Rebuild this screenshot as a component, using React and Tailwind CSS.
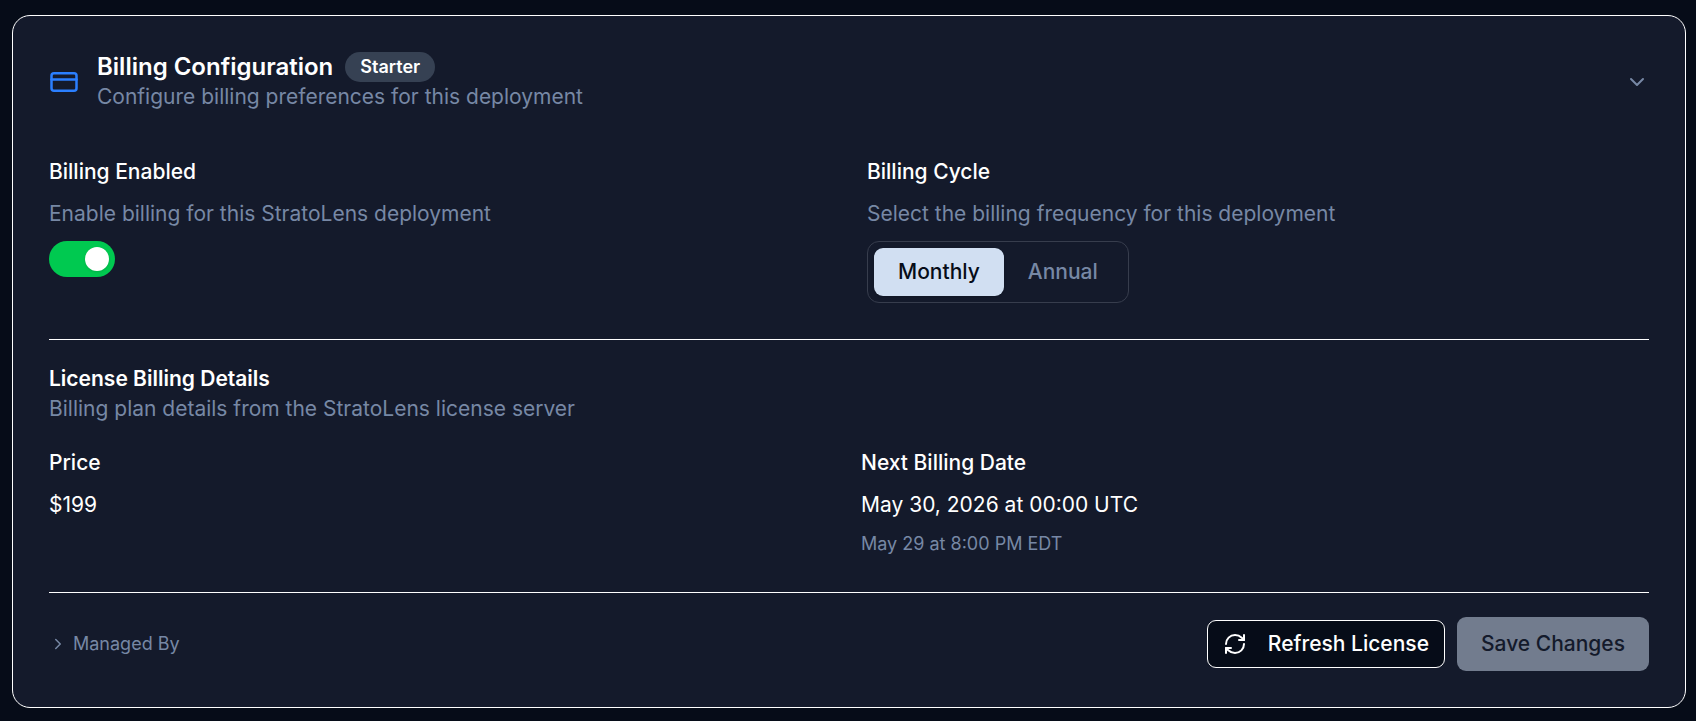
import { useState } from "react";
import { ChevronDown, ChevronRight, CreditCard, RefreshCw } from "lucide-react";

const cycles = ["Monthly", "Annual"];

export default function App() {
  const [enabled, setEnabled] = useState(true);
  const [cycle, setCycle] = useState("Monthly");

  return (
    <main className="min-h-screen bg-[#060c18] pt-[15px] pr-[10px] pb-[13px] pl-[12px] font-['Inter',sans-serif] text-[21px] leading-[30px] text-white">
      <section className="rounded-[18px] border border-white bg-[#141a2b] p-9">
        <header className="flex items-center justify-between">
          <div className="flex items-center gap-[18px]">
            <CreditCard className="size-[30px] text-[#2b7fff]" aria-hidden="true" />
            <div>
              <div className="flex items-center gap-3">
                <h2 className="text-[24px] leading-[30px] font-semibold">Billing Configuration</h2>
                <span className="rounded-full bg-[#364153] px-[15px] py-[3px] text-[18px] leading-[24px] font-semibold">
                  Starter
                </span>
              </div>
              <p className="text-[#7788a5]">Configure billing preferences for this deployment</p>
            </div>
          </div>
          <button type="button" aria-label="Collapse billing configuration" className="text-[#7788a5]">
            <ChevronDown className="size-6" />
          </button>
        </header>

        <div className="mt-[45px] grid grid-cols-2 gap-9">
          <div className="flex flex-col items-start gap-3">
            <label htmlFor="billing-enabled" className="font-medium">
              Billing Enabled
            </label>
            <p className="text-[#7788a5]">Enable billing for this StratoLens deployment</p>
            <input
              id="billing-enabled"
              type="checkbox"
              role="switch"
              checked={enabled}
              onChange={(e) => setEnabled(e.target.checked)}
              className="flex h-9 w-[66px] cursor-pointer appearance-none items-center rounded-full bg-[#4a5565] px-[6px] before:size-6 before:rounded-full before:bg-white before:shadow-sm before:content-[''] checked:justify-end checked:bg-[#00c950]"
            />
          </div>
          <div className="flex flex-col items-start gap-3">
            <h3 id="billing-cycle" className="font-medium">
              Billing Cycle
            </h3>
            <p className="text-[#7788a5]">Select the billing frequency for this deployment</p>
            <div
              role="group"
              aria-labelledby="billing-cycle"
              className="flex rounded-[12px] border border-[#373d4d] p-[6px]"
            >
              {cycles.map((name) => (
                <button
                  key={name}
                  type="button"
                  aria-pressed={cycle === name}
                  onClick={() => setCycle(name)}
                  className={
                    cycle === name
                      ? "rounded-[9px] bg-[#d1dff2] px-6 py-[9px] font-medium text-[#060c18] shadow-sm"
                      : "rounded-[9px] px-6 py-[9px] font-medium text-[#7788a5]"
                  }
                >
                  {name}
                </button>
              ))}
            </div>
          </div>
        </div>

        <div className="mt-9 border-t border-white pt-6">
          <h3 className="font-semibold">License Billing Details</h3>
          <p className="text-[#7788a5]">Billing plan details from the StratoLens license server</p>
          <dl className="mt-6 grid grid-cols-2 gap-6">
            <div className="flex flex-col gap-3">
              <dt className="font-medium">Price</dt>
              <dd>$199</dd>
            </div>
            <div className="flex flex-col gap-3">
              <dt className="font-medium">Next Billing Date</dt>
              <dd>May 30, 2026 at 00:00 UTC</dd>
              <dd className="text-[18px] leading-[24px] text-[#7788a5]">May 29 at 8:00 PM EDT</dd>
            </div>
          </dl>
        </div>

        <footer className="mt-9 flex items-center justify-between border-t border-white pt-6">
          <button
            type="button"
            aria-expanded="false"
            className="flex items-center gap-[6px] text-[18px] leading-[24px] text-[#7788a5]"
          >
            <ChevronRight className="size-[18px]" aria-hidden="true" />
            Managed By
          </button>
          <div className="flex items-center gap-3">
            <button
              type="button"
              className="flex h-12 items-center gap-[21px] rounded-[9px] border border-white bg-[#060c18] px-[15px] font-medium"
            >
              <RefreshCw className="size-6" aria-hidden="true" />
              Refresh License
            </button>
            <button
              type="button"
              disabled
              className="rounded-[9px] bg-[#727c8e] px-6 py-3 font-medium text-[#141a2b]"
            >
              Save Changes
            </button>
          </div>
        </footer>
      </section>
    </main>
  );
}
